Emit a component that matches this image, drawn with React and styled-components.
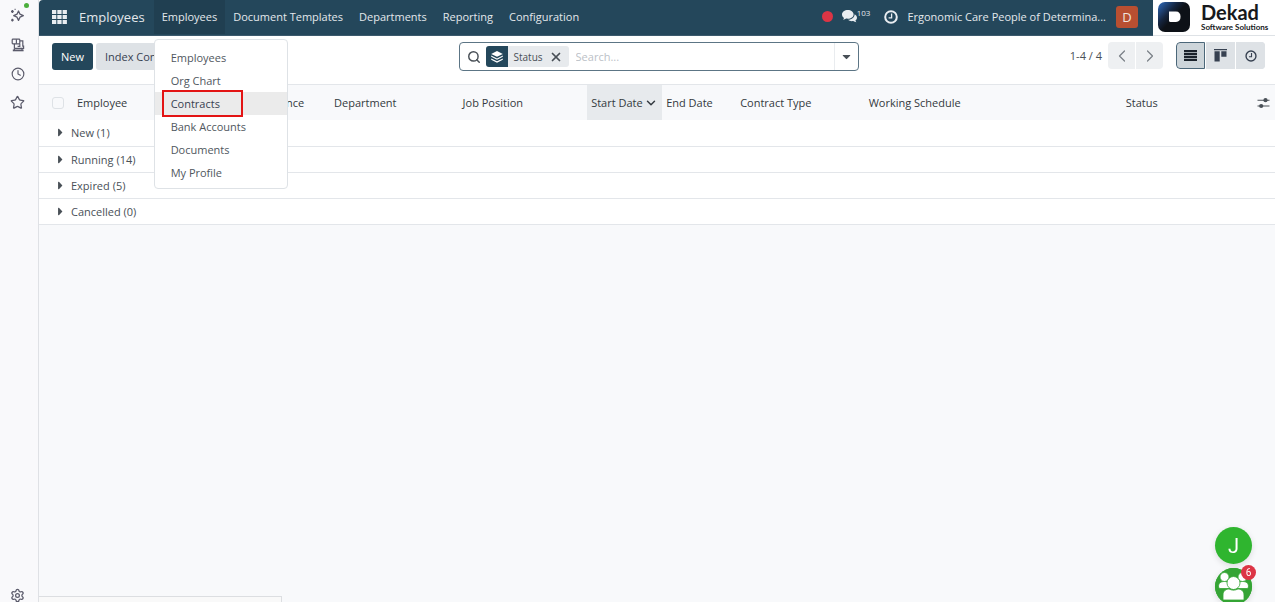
import { useState } from "react";
import styled, { createGlobalStyle } from "styled-components";
import { FaCaretDown, FaCaretRight } from "react-icons/fa";
import { ChevronDown, ChevronLeft, ChevronRight, Clock, Search, Settings, Star, X } from "lucide-react";

const menus = ["Employees", "Document Templates", "Departments", "Reporting", "Configuration"];

const submenu = ["Employees", "Org Chart", "Contracts", "Bank Accounts", "Documents", "My Profile"];

const columns = [
  { label: "Employee", width: "10.4%" },
  { label: "Contract Reference", width: "10.4%" },
  { label: "Department", width: "10.4%" },
  { label: "Job Position", width: "10.4%" },
  { label: "Start Date", width: "75px", sorted: true },
  { label: "End Date", width: "74px" },
  { label: "Contract Type", width: "10.4%" },
  { label: "Working Schedule", width: "20.8%" },
  { label: "Status", width: "auto" },
];

const groups = [
  { name: "New", count: 1 },
  { name: "Running", count: 14 },
  { name: "Expired", count: 5 },
  { name: "Cancelled", count: 0 },
];

const SparkIcon = () => (
  <svg width="15" height="15" viewBox="0 0 15 15" fill="none" stroke="currentColor" strokeWidth="1.3">
    <path d="M8.5 3 L10 6.200 L13.300 7.700 L10 9.200 L8.500 12.400 L7 9.200 L3.700 7.700 L7 6.200 Z" strokeLinejoin="round" />
    <path d="M1 3.500h2.800M2.400 2.100v2.800M1 12.200h2.800M2.400 10.800v2.800M4.600 1.300h1" />
  </svg>
);

const DeskIcon = () => (
  <svg width="14" height="14" viewBox="0 0 14 14" fill="none" stroke="currentColor" strokeWidth="1.2">
    <rect x="1.2" y="1.2" width="7.600" height="4.6" rx="0.8" />
    <path d="M5.400 1.2v4.6M3.4 5.8v4.6M8.800 2.8h3v5.4h0.800v2.2H3.4M8.8 5.800v2.600H6.600" />
    <path d="M1.8 12.400h10.800" strokeWidth="1.800" />
    <path d="M3.400 10.400v2M11 10.400v2" />
  </svg>
);

const GridIcon = () => (
  <svg width="15" height="14" viewBox="0 0 15 14" fill="#e9edf1">
    {[0, 5, 10].map((y) => [0, 5.3, 10.6].map((x) => (
      <rect key={`${x}-${y}`} x={x} y={y} width="4.3" height="4" />
    )))}
  </svg>
);

const ChatIcon = () => (
  <svg width="15" height="13" viewBox="0 0 15 13" fill="#e9edf1">
    <path d="M5.8 0C2.6 0 0 2 0 4.5c0 1.4.8 2.6 2 3.4-.2.8-.6 1.3-1 1.8 1.200 0 2.300-.4 3.200-1.100.5.1 1 .1 1.600.1 3.200 0 5.800-1.900 5.800-4.300S9 0 5.800 0z" />
    <path d="M12.600 4.200c.1 2.900-2.600 5.500-6.600 5.600.9.900 2.300 1.400 3.800 1.400.5 0 1 0 1.400-.1.900.7 2 1.100 3.200 1.100-.4-.4-.8-1-1-1.700 1-.7 1.600-1.700 1.600-2.800 0-1.400-.9-2.700-2.400-3.500z" />
  </svg>
);

const ClockIcon = ({ size, color, width }) => (
  <svg width={size} height={size} viewBox="0 0 14 14" fill="none" stroke={color} strokeWidth={width}>
    <circle cx="7" cy="7" r="5.800" />
    <path d="M7.600 3.600v4.200H4.600" strokeWidth="1.300" />
  </svg>
);

const LayersIcon = () => (
  <svg width="12" height="12" viewBox="0 0 12 12" fill="#fff">
    <path d="M6 0 11.800 2.900 6 5.800 0.200 2.900z" />
    <path d="M0.200 4.600 6 7.500l5.800-2.900v1.200L6 8.700 0.200 5.800z" />
    <path d="M0.200 7.400 6 10.300l5.800-2.900v1.300L6 11.700 0.200 8.700z" />
  </svg>
);

const ListIcon = () => (
  <svg width="13" height="11" viewBox="0 0 13 11" fill="#1a222b">
    <path d="M0 0h13v2.200H0zM0 2.900h13v2.200H0zM0 5.800h13v2.200H0zM0 8.700h13v2.200H0z" />
  </svg>
);

const KanbanIcon = () => (
  <svg width="13" height="13" viewBox="0 0 13 13" fill="#374151">
    <path d="M0 0h13v1.200H0zM0.500 2.200h5.200v10.300H0.500zM7.300 2.200h5.200v5.600H7.300z" />
  </svg>
);

const SlidersIcon = () => (
  <svg width="13" height="12" viewBox="0 0 13 12" fill="#495057" stroke="#495057">
    <path d="M0.500 3.200h12M0.500 9h12" strokeWidth="1.100" />
    <circle cx="8.500" cy="3.200" r="2.100" stroke="none" />
    <circle cx="4.200" cy="9" r="2.100" stroke="none" />
  </svg>
);

const LogoMark = () => (
  <svg width="32" height="31" viewBox="0 0 32 31">
    <defs>
      <linearGradient id="mark" x1="0" y1="0.100" x2="0.700" y2="0.700">
        <stop offset="0" stopColor="#2b62ae" />
        <stop offset="0.450" stopColor="#15253f" />
        <stop offset="0.700" stopColor="#0d1117" />
      </linearGradient>
    </defs>
    <rect y="1" width="32" height="30" rx="7" fill="url(#mark)" />
    <path d="M11 10.500h7c3 0 4.500 2 4.500 5.200s-1.500 5.200-4.500 5.200h-5.500q-1.500 0-1.500-1.500z" fill="#fff" />
  </svg>
);

const PeopleIcon = () => (
  <svg width="37" height="37" viewBox="0 0 37 37">
    <circle cx="18.500" cy="18.500" r="18.500" fill="#35a435" />
    <g fill="#fff" stroke="#35a435" strokeWidth="0.800">
      <circle cx="9.500" cy="9" r="4.500" />
      <circle cx="27.500" cy="9" r="4.500" />
      <path d="M3.500 19c0-4 2-5.500 6-5.500s5 2 5 7H4.500zM33.500 19c0-4-2-5.500-6-5.500s-5 2-5 7h10z" />
      <circle cx="18.500" cy="15" r="6.500" />
      <path d="M8 32v-5c0-4 3-6 6-6 3 1.500 6 1.500 9 0 3 0 6 2 6 6v5z" />
    </g>
  </svg>
);

const App = () => {
  const [view, setView] = useState("list");
  const [query, setQuery] = useState("");

  return (
    <>
      <GlobalStyle />
      <Page>
        <Sidebar>
          <SideButton aria-label="Assistant"><SparkIcon /><OnlineDot /></SideButton>
          <SideButton aria-label="Workspace"><DeskIcon /></SideButton>
          <SideButton aria-label="History"><Clock size={14} strokeWidth={2} /></SideButton>
          <SideButton aria-label="Favorites"><Star size={15} strokeWidth={2} /></SideButton>
          <SideSpacer />
          <SideButton aria-label="Settings"><Settings size={15} strokeWidth={2} /></SideButton>
        </Sidebar>
        <Main>
          <TopBar>
            <NavBar>
              <AppsButton aria-label="Apps"><GridIcon /></AppsButton>
              <Brand href="#">Employees</Brand>
              {menus.map((menu, i) => (
                <MenuItem key={menu}>
                  <MenuButton $active={i === 0}>{menu}</MenuButton>
                  {i === 0 && (
                    <Dropdown>
                      {submenu.map((item) => (
                        <DropdownItem key={item} href="#" $active={item === "Contracts"}>
                          {item}
                          {item === "Contracts" && <Highlight />}
                        </DropdownItem>
                      ))}
                    </Dropdown>
                  )}
                </MenuItem>
              ))}
              <Systray>
                <RecordDot />
                <Messages aria-label="Messages"><ChatIcon /><Count>103</Count></Messages>
                <ClockIcon size={14} color="#e9edf1" width={2} />
                <Company>Ergonomic Care People of Determina...</Company>
                <Avatar>D</Avatar>
              </Systray>
            </NavBar>
            <Logo>
              <LogoMark />
              <div>
                <LogoName>Dekad</LogoName>
                <LogoText>Software Solutions</LogoText>
              </div>
            </Logo>
          </TopBar>

          <ControlPanel>
            <Actions>
              <Button $primary>New</Button>
              <Button>Index Contracts</Button>
            </Actions>
            <SearchBox>
              <Search size={14} strokeWidth={2.500} color="#495057" />
              <Facet>
                <FacetIcon><LayersIcon /></FacetIcon>
                <span>Status</span>
                <FacetClose aria-label="Remove"><X size={14} strokeWidth={3} /></FacetClose>
              </Facet>
              <SearchInput
                aria-label="Search"
                placeholder="Search..."
                value={query}
                onChange={(e) => setQuery(e.target.value)}
              />
              <SearchToggle aria-label="Search options"><FaCaretDown size={13} /></SearchToggle>
            </SearchBox>
            <PagerArea>
              <span>1-4 / 4</span>
              <ButtonGroup>
                <PagerButton aria-label="Previous"><ChevronLeft size={20} strokeWidth={1.5} /></PagerButton>
                <PagerButton aria-label="Next"><ChevronRight size={20} strokeWidth={1.5} /></PagerButton>
              </ButtonGroup>
              <ButtonGroup>
                <ViewButton aria-label="List" $active={view === "list"} onClick={() => setView("list")}>
                  <ListIcon />
                </ViewButton>
                <ViewButton aria-label="Kanban" $active={view === "kanban"} onClick={() => setView("kanban")}>
                  <KanbanIcon />
                </ViewButton>
                <ViewButton aria-label="Activity" $active={view === "activity"} onClick={() => setView("activity")}>
                  <ClockIcon size={12} color="#374151" width={1.600} />
                </ViewButton>
              </ButtonGroup>
            </PagerArea>
          </ControlPanel>

          <Table>
            <colgroup>
              <Col $width="34px" />
              {columns.map((col) => <Col key={col.label} $width={col.width} />)}
              <Col $width="25px" />
            </colgroup>
            <thead>
              <tr>
                <CheckCell><Checkbox aria-label="Select all" /></CheckCell>
                {columns.map((col) => (
                  <HeadCell key={col.label} $sorted={col.sorted}>
                    <HeadLabel>
                      {col.label}
                      {col.sorted && <ChevronDown size={14} strokeWidth={2.500} />}
                    </HeadLabel>
                  </HeadCell>
                ))}
                <OptionsCell><IconButton aria-label="Columns"><SlidersIcon /></IconButton></OptionsCell>
              </tr>
            </thead>
            <tbody>
              {groups.map((group) => (
                <tr key={group.name}>
                  <GroupCell colSpan={columns.length + 2}>
                    <GroupLabel>
                      <FaCaretRight size={13} />
                      {group.name} ({group.count})
                    </GroupLabel>
                  </GroupCell>
                </tr>
              ))}
            </tbody>
          </Table>
        </Main>
        <LinkPreview />
        <ChatHeads>
          <ChatHead aria-label="Chat with J">J</ChatHead>
          <ChatHead aria-label="Group chat"><PeopleIcon /><Unread>6</Unread></ChatHead>
        </ChatHeads>
      </Page>
    </>
  );
};

const GlobalStyle = createGlobalStyle`
  * {
    box-sizing: border-box;
  }

  body {
    margin: 0;
    background: #f8f9fb;
    color: #495057;
    font-family: "Segoe UI", "Open Sans", "Noto Sans", sans-serif;
    font-size: 11px;
    overflow: hidden;
  }

  button, input {
    font: inherit;
    color: inherit;
    border: 0;
    padding: 0;
    background: none;
  }

  a {
    color: inherit;
    text-decoration: none;
  }

  svg {
    display: block;
    flex-shrink: 0;
  }
`;

const Page = styled.div`
  display: flex;
  height: 100vh;
`;

const Sidebar = styled.aside`
  display: flex;
  flex-direction: column;
  align-items: center;
  width: 39px;
  padding: 1px 3px 0 0;
  border-right: 1px solid #dfe1e5;
  color: #5b5b6b;
  background: #f9f9fb;
`;

const SideButton = styled.button`
  position: relative;
  display: flex;
  align-items: center;
  justify-content: center;
  width: 29px;
  height: 29px;

  &:last-child {
    height: 14px;
  }
`;

const OnlineDot = styled.span`
  position: absolute;
  top: 2px;
  right: 3px;
  width: 5px;
  height: 5px;
  border-radius: 50%;
  background: #4caf3d;
`;

const SideSpacer = styled.div`
  flex: 1;
`;

const Main = styled.main`
  flex: 1;
  min-width: 0;
`;

const TopBar = styled.header`
  display: flex;
  height: 36px;
  background: #fff;
`;

const NavBar = styled.nav`
  display: flex;
  flex: 1;
  align-items: center;
  min-width: 0;
  padding: 0 15px 2px 13px;
  border-bottom: 1px solid #3c5a6d;
  border-top-left-radius: 4px;
  color: #e3e8ec;
  background: #24475b;
`;

const AppsButton = styled.button`
  margin-right: 12px;
`;

const Brand = styled.a`
  margin-right: 9px;
  font-size: 13px;
`;

const MenuItem = styled.div`
  position: relative;
  height: 35px;
`;

const MenuButton = styled.button`
  height: 100%;
  padding: 0 8px;
  white-space: nowrap;
  background: ${(props) => (props.$active ? "#203f51" : "transparent")};
`;

const Dropdown = styled.div`
  position: absolute;
  top: 40px;
  left: 0;
  z-index: 2;
  width: 134px;
  padding: 6px 0 4px;
  border: 1px solid #dee2e6;
  border-radius: 4px;
  color: #50575e;
  background: #fff;
`;

const DropdownItem = styled.a`
  position: relative;
  display: block;
  padding: 0 16px;
  line-height: 23px;
  color: ${(props) => (props.$active ? "#374151" : "inherit")};
  background: ${(props) => (props.$active ? "#ebebeb" : "transparent")};
`;

const Highlight = styled.span`
  position: absolute;
  inset: -2px 44px -2px 7px;
  border: 2px solid #e31414;
`;

const Systray = styled.div`
  display: flex;
  align-items: center;
  margin-left: auto;
`;

const RecordDot = styled.span`
  width: 11px;
  height: 11px;
  margin-right: 9px;
  border-radius: 50%;
  background: #dc3545;
`;

const Messages = styled.button`
  display: flex;
  align-items: center;
  margin-right: 14px;
`;

const Count = styled.sup`
  margin-top: -8px;
  font-size: 8px;
  line-height: 12px;
`;

const Company = styled.span`
  margin: 0 10px 0 9px;
  white-space: nowrap;
`;

const Avatar = styled.button`
  width: 22px;
  height: 22px;
  border-radius: 3px;
  color: #f1e4df;
  font-size: 13px;
  background: #b84f31;
`;

const Logo = styled.div`
  display: flex;
  align-items: center;
  gap: 11px;
  width: 122px;
  padding: 0 5px 2px;
  border-bottom: 1px solid #dee2e6;
  color: #17191c;
  font-family: Lato, sans-serif;
`;

const LogoName = styled.div`
  font-size: 20px;
  font-weight: 700;
  line-height: 22px;
`;

const LogoText = styled.div`
  font-size: 8px;
  font-weight: 700;
  line-height: 9px;
  white-space: nowrap;
`;

const ControlPanel = styled.div`
  display: grid;
  grid-template-columns: 1fr 400px 1fr;
  align-items: start;
  height: 49px;
  padding: 6px 10px 0 13px;
  border-bottom: 1px solid #e3e6ea;
  background: #fff;
`;

const Actions = styled.div`
  display: flex;
  gap: 3px;
  padding-top: 1px;
`;

const Button = styled.button`
  height: 27px;
  padding: 0 9px;
  border-radius: 3px;
  color: ${(props) => (props.$primary ? "#fff" : "#374151")};
  background: ${(props) => (props.$primary ? "#24475b" : "#dee2e6")};
`;

const SearchBox = styled.div`
  display: flex;
  align-items: center;
  height: 29px;
  padding-left: 7px;
  border: 1px solid #5c7585;
  border-radius: 4px;
`;

const Facet = styled.div`
  display: flex;
  align-items: center;
  height: 21px;
  margin: 0 7px 0 5px;
  border-radius: 3px;
  overflow: hidden;
  font-size: 10px;
  background: #e7eaed;
`;

const FacetIcon = styled.span`
  display: flex;
  align-items: center;
  justify-content: center;
  width: 22px;
  height: 100%;
  margin-right: 6px;
  background: #24475b;
`;

const FacetClose = styled.button`
  padding: 0 6px;
`;

const SearchInput = styled.input`
  flex: 1;
  min-width: 0;
  outline: none;

  &::placeholder {
    color: #bcc1c7;
  }
`;

const SearchToggle = styled.button`
  display: flex;
  align-items: center;
  justify-content: center;
  width: 24px;
  height: 100%;
  border-left: 1px solid #e9ecef;
`;

const PagerArea = styled.div`
  display: flex;
  align-items: center;
  justify-content: flex-end;

  > span {
    margin-right: 6px;
  }
`;

const ButtonGroup = styled.div`
  display: flex;
  gap: 1px;
  border-radius: 4px;
  overflow: hidden;

  & + & {
    margin-left: 13px;
  }
`;

const PagerButton = styled.button`
  display: flex;
  align-items: center;
  justify-content: center;
  width: 27px;
  height: 27px;
  color: #7b8188;
  background: #eef0f2;
`;

const ViewButton = styled.button`
  display: flex;
  align-items: center;
  justify-content: center;
  width: 29px;
  height: 27px;
  border: 1px solid ${(props) => (props.$active ? "#4b6779" : "#dee2e6")};
  background: ${(props) => (props.$active ? "#cdd5da" : "#dee2e6")};

  &:first-child {
    border-radius: 4px 0 0 4px;
  }
`;

const Table = styled.table`
  width: 100%;
  table-layout: fixed;
  border-collapse: collapse;
`;

const Col = styled.col`
  width: ${(props) => props.$width};
`;

const HeadCell = styled.th`
  height: 35px;
  padding: 0 4px;
  color: #343a40;
  font-weight: 400;
  text-align: left;
  white-space: nowrap;
  background: ${(props) => (props.$sorted ? "#e7eaed" : "transparent")};
`;

const HeadLabel = styled.span`
  display: flex;
  align-items: center;
  justify-content: space-between;
`;

const CheckCell = styled.th`
  padding: 0 0 0 13px;
`;

const Checkbox = styled.input.attrs({ type: "checkbox" })`
  display: block;
  width: 12px;
  height: 12px;
  margin: 0;
  border: 1px solid #dee2e6;
  border-radius: 3px;
  appearance: none;
`;

const OptionsCell = styled.th`
  padding: 0 0 0 7px;
`;

const IconButton = styled.button`
  display: block;
`;

const GroupCell = styled.td`
  height: 26px;
  padding: 0 15px;
  border-bottom: 1px solid #e3e6ea;
  background: #fff;
`;

const GroupLabel = styled.div`
  display: flex;
  align-items: center;
  gap: 4px;
`;

/* browser link preview in the bottom corner */
const LinkPreview = styled.div`
  position: fixed;
  bottom: 0;
  left: 39px;
  width: 243px;
  height: 6px;
  border: 1px solid #dcdee1;
  border-width: 1px 1px 0 0;
  background: #f9f9f9;
`;

const ChatHeads = styled.div`
  position: fixed;
  right: 23px;
  bottom: -3px;
  display: flex;
  flex-direction: column;
  gap: 4px;
`;

const ChatHead = styled.button`
  position: relative;
  width: 37px;
  height: 37px;
  border-radius: 50%;
  color: #fff;
  font-family: Roboto, sans-serif;
  font-size: 20px;
  background: #2fb52f;
  box-shadow: 0 2px 6px rgba(0, 0, 0, 0.12);
`;

const Unread = styled.span`
  position: absolute;
  top: -3px;
  right: -4px;
  width: 15px;
  height: 15px;
  border-radius: 50%;
  font-size: 10px;
  line-height: 15px;
  background: #dc3545;
`;

export default App;
